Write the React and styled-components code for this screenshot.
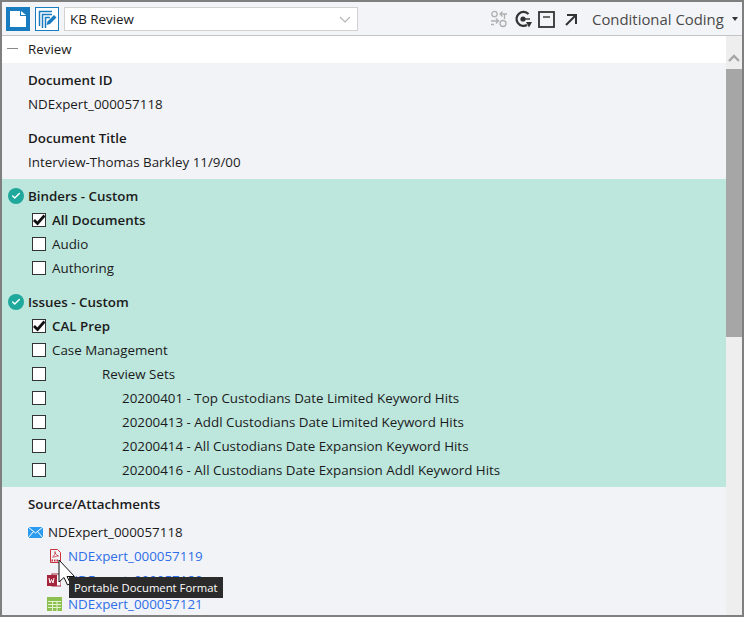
import styled, { createGlobalStyle } from 'styled-components'
import { Check } from 'lucide-react'

const GlobalStyle = createGlobalStyle`
  html, body {
    margin: 0;
    padding: 0;
    background: #f2f3f7;
  }
  body {
    font-family: "Open Sans", "Noto Sans", "Liberation Sans", sans-serif;
    font-size: 13.37px;
    color: #1b1b1b;
  }
`

const Frame = styled.div`
  position: relative;
  width: 744px;
  height: 617px;
  box-sizing: border-box;
  border: 2px solid #7f7f7f;
  display: flex;
  flex-direction: column;
  overflow: hidden;
`

const Toolbar = styled.div`
  flex: none;
  height: 34px;
  box-sizing: border-box;
  padding: 5px 0 0 4px;
  background: #f3f4f8;
  border-bottom: 1px solid #c4c4c4;
  display: flex;
  align-items: flex-start;
`

const ModeButton = styled.button`
  width: 24px;
  height: 24px;
  padding: 0;
  margin-right: 5px;
  box-sizing: border-box;
  border: 1px solid #1a7cc0;
  background: ${(props) => (props.$active ? '#1a7cc0' : '#fff')};
  display: flex;
  align-items: center;
  justify-content: center;
`

const LayoutSelect = styled.div`
  width: 294px;
  height: 24px;
  box-sizing: border-box;
  border: 1px solid #d2d2d2;
  background: #fff;
  display: flex;
  align-items: center;
  justify-content: space-between;
  padding: 0 6px 0 5px;
`

const ToolIcons = styled.div`
  margin-left: 132px;
  display: flex;
  align-items: center;
  height: 28px;
  margin-top: -2px;
`

const ToolIcon = styled.svg`
  flex: none;
  margin-right: ${(props) => props.$gap}px;
`

const CodingLabel = styled.div`
  margin-left: 14px;
  font-size: 14.9px;
  color: #4a4a4a;
  white-space: nowrap;
`

const Caret = styled.div`
  margin-left: 8px;
  width: 0;
  height: 0;
  border-left: 3px solid transparent;
  border-right: 3px solid transparent;
  border-top: 4px solid #333;
`

const Body = styled.div`
  flex: 1;
  min-height: 0;
  display: flex;
`

const Main = styled.div`
  flex: 1;
  min-width: 0;
  overflow: hidden;
`

const SectionHeader = styled.div`
  height: 27px;
  box-sizing: border-box;
  padding: 0 0 2px 5px;
  background: #fff;
  display: flex;
  align-items: center;
`

const Dash = styled.div`
  width: 11px;
  height: 1px;
  background: #8a8a8a;
  margin-right: 10px;
`

const Line = styled.div`
  height: ${(props) => props.$height || 24}px;
  display: flex;
  align-items: center;
  white-space: nowrap;
  padding-left: ${(props) => props.$left || 26}px;
  font-weight: ${(props) => (props.$bold ? 600 : 400)};
`

const Field = styled.div`
  padding-top: ${(props) => props.$top}px;
`

const GreenBand = styled.div`
  background: #bde6dd;
  margin-top: 5px;
  padding: 5px 0;
`

const Group = styled.div`
  margin-bottom: ${(props) => props.$gap || 0}px;
`

const GroupTitle = styled.div`
  height: 24px;
  display: flex;
  align-items: center;
  padding-left: 6px;
  font-weight: 600;
`

const DoneBadge = styled.span`
  width: 16px;
  height: 16px;
  border-radius: 50%;
  background: #1fa89c;
  color: #fff;
  margin-right: 4px;
  display: flex;
  align-items: center;
  justify-content: center;
`

const CheckRow = styled.div`
  height: 24px;
  display: flex;
  align-items: center;
  padding-left: 30px;
  white-space: nowrap;
  font-weight: ${(props) => (props.$checked ? 600 : 400)};
`

const Box = styled.span`
  flex: none;
  width: 14px;
  height: 14px;
  box-sizing: border-box;
  border: 1px solid #333;
  background: #fff;
  display: flex;
  align-items: center;
  justify-content: center;
`

const CheckLabel = styled.span`
  margin-left: ${(props) => props.$indent || 6}px;
`

const Attachments = styled.div`
  padding-top: 5px;
`

const FileRow = styled.div`
  height: 24px;
  display: flex;
  align-items: center;
  padding-left: ${(props) => props.$left}px;
  white-space: nowrap;
`

const FileIcon = styled.svg`
  flex: none;
  margin-right: ${(props) => props.$gap}px;
`

const FileLink = styled.span`
  color: ${(props) => (props.$plain ? '#1b1b1b' : '#2f6fe8')};
`

const ScrollBar = styled.div`
  flex: none;
  width: 16px;
  background: #eeeeee;
  display: flex;
  flex-direction: column;
  align-items: center;
`

const ScrollArrow = styled.svg`
  margin-top: 18px;
  margin-bottom: 7px;
`

const ScrollThumb = styled.div`
  width: 100%;
  height: 268px;
  background: #a6a6a6;
`

const Tooltip = styled.div`
  position: absolute;
  left: 67px;
  top: 575px;
  height: 21px;
  padding: 0 5px;
  background: #2b2b2b;
  color: #fff;
  font-size: 11.3px;
  display: flex;
  align-items: center;
  white-space: nowrap;
`

const Pointer = styled.svg`
  position: absolute;
  left: 56px;
  top: 557px;
`

const binders = ['Audio', 'Authoring']

const reviewSets = [
  '20200401 - Top Custodians Date Limited Keyword Hits',
  '20200413 - Addl Custodians Date Limited Keyword Hits',
  '20200414 - All Custodians Date Expansion Keyword Hits',
  '20200416 - All Custodians Date Expansion Addl Keyword Hits',
]

function CheckItem({ checked, indent, children }) {
  return (
    <CheckRow $checked={checked}>
      <Box>
        {checked && (
          <svg width="12" height="12" viewBox="0 0 12 12" fill="none" stroke="#111" strokeWidth="2.8">
            <path d="M1 6l3.500 3.500L11.500 1.500" />
          </svg>
        )}
      </Box>
      <CheckLabel $indent={indent}>{children}</CheckLabel>
    </CheckRow>
  )
}

function GroupHeading({ children }) {
  return (
    <GroupTitle>
      <DoneBadge>
        <Check size={10} strokeWidth={3.5} />
      </DoneBadge>
      {children}
    </GroupTitle>
  )
}

function App() {
  return (
    <>
      <GlobalStyle />
      <Frame>
        <Toolbar>
          <ModeButton $active>
            <svg width="16" height="16" viewBox="0 0 16 16">
              <path d="M0 0h10v5h6v11H0z M11 0l5 4h-5z" fill="#fff" />
            </svg>
          </ModeButton>
          <ModeButton>
            <svg width="20" height="20" viewBox="0 0 20 20" fill="none" stroke="#1a7cc0" strokeWidth="1.5">
              <path d="M2.500 17V2.500H15" />
              <path d="M5.500 19V5.500H15" />
              <path d="M8.500 19V8.500H13" />
              <path d="M9.500 16l1-3.500 6.500-6.500 2.500 2.500-6.500 6.500z" fill="#1a7cc0" stroke="none" />
            </svg>
          </ModeButton>
          <LayoutSelect>
            KB Review
            <svg width="12" height="7" viewBox="0 0 12 7" fill="none" stroke="#b5b5b5" strokeWidth="1.2">
              <path d="M1 1l5 5 5-5" />
            </svg>
          </LayoutSelect>
          <ToolIcons>
            <ToolIcon $gap={6} width="18" height="18" viewBox="0 0 18 18" fill="none" stroke="#b0b0b0" strokeWidth="1.3">
              <circle cx="4.500" cy="4" r="2.700" />
              <circle cx="13" cy="13.500" r="3" />
              <path d="M1 11h7M6 8.500L8.500 11 6 13.500M1 14.500h3" />
              <path d="M17 4h-7M12.500 1.500L10 4l2.500 2.500M14.500 4v5" />
            </ToolIcon>
            <ToolIcon $gap={6} width="18" height="18" viewBox="0 0 18 18" fill="none" stroke="#333" strokeWidth="2.2">
              <path d="M14.500 4A7 7 0 1 0 13 15" />
              <circle cx="9" cy="9" r="2.600" fill="#333" stroke="none" />
              <path d="M11 9h5" strokeWidth="1.400" />
              <path d="M12 12h6l-3 5.500z" fill="#333" stroke="none" />
            </ToolIcon>
            <ToolIcon $gap={9} width="17" height="17" viewBox="0 0 17 17" fill="none" stroke="#333" strokeWidth="1.8">
              <rect x="1" y="1" width="15" height="15" />
              <path d="M5 6h7" strokeWidth="1.400" />
            </ToolIcon>
            <ToolIcon $gap={0} width="14" height="14" viewBox="0 0 14 14" fill="none" stroke="#333" strokeWidth="2">
              <path d="M3 3h9v9M12 3L2 13" />
            </ToolIcon>
            <CodingLabel>Conditional Coding</CodingLabel>
            <Caret />
          </ToolIcons>
        </Toolbar>
        <Body>
          <Main>
            <SectionHeader>
              <Dash />
              Review
            </SectionHeader>
            <Field $top={5}>
              <Line $bold>Document ID</Line>
              <Line>NDExpert_000057118</Line>
            </Field>
            <Field $top={10}>
              <Line $bold>Document Title</Line>
              <Line>Interview-Thomas Barkley 11/9/00</Line>
            </Field>
            <GreenBand>
              <Group $gap={10}>
                <GroupHeading>Binders - Custom</GroupHeading>
                <CheckItem checked>All Documents</CheckItem>
                {binders.map((name) => (
                  <CheckItem key={name}>{name}</CheckItem>
                ))}
              </Group>
              <Group>
                <GroupHeading>Issues - Custom</GroupHeading>
                <CheckItem checked>CAL Prep</CheckItem>
                <CheckItem>Case Management</CheckItem>
                <CheckItem indent={56}>Review Sets</CheckItem>
                {reviewSets.map((name) => (
                  <CheckItem key={name} indent={76}>
                    {name}
                  </CheckItem>
                ))}
              </Group>
            </GreenBand>
            <Attachments>
              <Line $bold>Source/Attachments</Line>
              <Line $height={4} />
              <FileRow $left={26}>
                <FileIcon $gap={5} width="15" height="11" viewBox="0 0 15 11">
                  <rect width="15" height="11" fill="#2d9cf0" />
                  <path d="M0 0l7.500 6L15 0M0 11l5.500-6.500M15 11L9.500 4.500" fill="none" stroke="#fff" strokeWidth="1" />
                </FileIcon>
                <FileLink $plain>NDExpert_000057118</FileLink>
              </FileRow>
              <FileRow $left={48}>
                <FileIcon $gap={7} width="11" height="14" viewBox="0 0 11 14" fill="none" stroke="#c8323c" strokeWidth="1">
                  <path d="M.5.5h7l3 3v10H.5z" />
                  <path d="M2.500 8C4.500 7 5.500 4 5 2.500 5 4.500 6 6 8.500 7 6 7 4 8.500 2.500 8z" strokeWidth=".8" />
                  <path d="M1.500 11.500h1.500M4 11.500h1.500M6.500 11.500h1.500" strokeWidth="2" />
                </FileIcon>
                <FileLink>NDExpert_000057119</FileLink>
              </FileRow>
              <FileRow $left={45}>
                <FileIcon $gap={7} width="14" height="14" viewBox="0 0 14 14">
                  <rect x="5" y="1" width="9" height="12" fill="#fff" stroke="#a4243b" />
                  <rect y="2" width="10" height="11" fill="#a4243b" />
                  <path d="M2 5l1 5 1.500-3.500L6 10l1-5" fill="none" stroke="#fff" strokeWidth="1" />
                </FileIcon>
                <FileLink>NDExpert_000057120</FileLink>
              </FileRow>
              <FileRow $left={45}>
                <FileIcon $gap={6} width="15" height="14" viewBox="0 0 15 14">
                  <rect width="15" height="14" fill="#8cc152" />
                  <path d="M1 4.500h13M1 7.500h13M1 10.500h13M5.500 4v10M10 4v10" stroke="#e4f2d0" strokeWidth="1" />
                </FileIcon>
                <FileLink>NDExpert_000057121</FileLink>
              </FileRow>
            </Attachments>
          </Main>
          <ScrollBar>
            <ScrollArrow width="12" height="8" viewBox="0 0 12 8" fill="none" stroke="#a6a6a6" strokeWidth="2.4">
              <path d="M1 7l5-5 5 5" />
            </ScrollArrow>
            <ScrollThumb />
          </ScrollBar>
        </Body>
        <Pointer width="18" height="27" viewBox="0 0 18 27">
          <path d="M1 1v22l5-4.500 3.500 7.500 3-1.500L9 17.500h7.500z" fill="#fff" stroke="#111" strokeWidth="1" />
        </Pointer>
        <Tooltip>Portable Document Format</Tooltip>
      </Frame>
    </>
  )
}

export default App
